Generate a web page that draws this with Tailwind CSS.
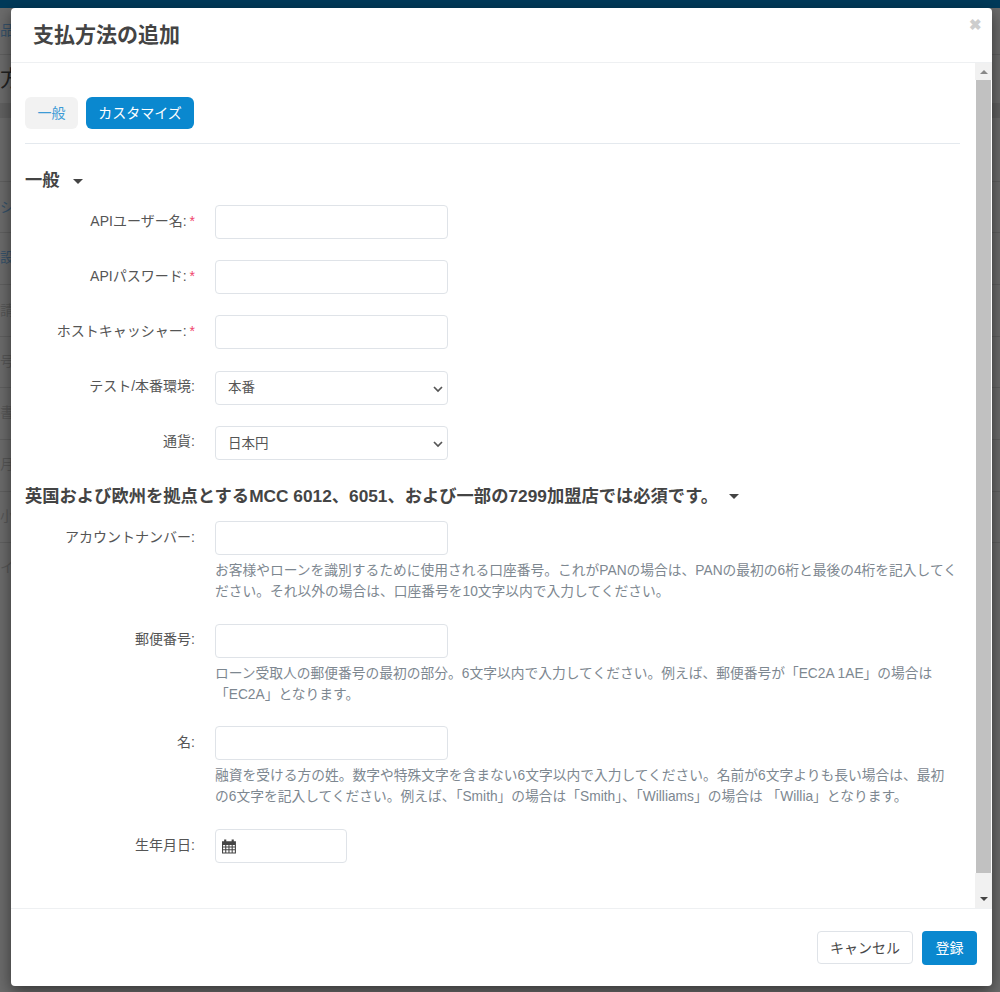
<!DOCTYPE html>
<html lang="ja">
<head>
  <meta charset="UTF-8" />
  <title>支払方法の追加</title>
  <script src="https://cdn.jsdelivr.net/npm/@tailwindcss/browser@4"></script>
</head>
<body class="h-[992px] w-[1000px] overflow-hidden bg-[#6b6b6b] font-['Liberation_Sans','Noto_Sans_CJK_JP',sans-serif] text-[#555]">
  <div class="relative h-[992px] overflow-hidden">
    <div class="h-2 bg-[#003a5a]"></div>

    <!-- page behind the modal -->
    <div class="h-[47px] border-b border-[#5f5f5f] pt-[14px] text-sm leading-4 text-[#36526a]">品</div>
    <div class="h-[48px] pt-3 text-[22px] leading-6 text-[#222]">方</div>
    <div class="h-[15px] bg-[#616161]"></div>
    <div class="h-[64px] border-b border-[#5f5f5f]"></div>
    <div class="h-[51px] border-b border-[#5f5f5f] pt-[17px] text-sm leading-4 text-[#36526a]">シ</div>
    <div class="h-[52px] border-b border-[#5f5f5f] pt-[16px] text-sm leading-4 text-[#36526a]">設</div>
    <div class="h-[52px] border-b border-[#5f5f5f] pt-[17px] text-sm leading-4 text-[#575757]">請</div>
    <div class="h-[51px] border-b border-[#5f5f5f] pt-[16px] text-sm leading-4 text-[#575757]">号</div>
    <div class="h-[52px] border-b border-[#5f5f5f] pt-[16px] text-sm leading-4 text-[#575757]">書</div>
    <div class="h-[52px] border-b border-[#5f5f5f] pt-[16px] text-sm leading-4 text-[#575757]">月</div>
    <div class="h-[51px] border-b border-[#5f5f5f] pt-[16px] text-sm leading-4 text-[#575757]">小</div>
    <div class="h-[51px] pt-[16px] text-sm leading-4 text-[#575757]">イ</div>

    <!-- modal -->
    <div class="absolute left-[11px] top-2 flex h-[978px] w-[981px] flex-col rounded bg-white shadow-[0_5px_15px_rgba(0,0,0,0.5)]">
      <div class="relative flex h-[55px] shrink-0 items-center border-b border-[#eef0f2] pl-[22px]">
        <h2 class="text-[21px] font-bold leading-6 text-[#444]">支払方法の追加</h2>
        <span class="absolute right-[10px] top-[7px] text-[15px] font-bold leading-5 text-[#cdcdcd]">✖</span>
      </div>

      <div class="flex min-h-0 flex-1">
        <div class="w-[964px] pl-[14px] pr-[15px]">
          <div class="flex h-[81px] items-start gap-2 border-b border-[#e4e9ee] pt-[34px]">
            <button class="h-8 w-[53px] rounded-md bg-[#f2f2f2] text-sm text-[#3c9bd6]">一般</button>
            <button class="h-8 w-[108px] rounded-md bg-[#0a88cf] text-sm text-white">カスタマイズ</button>
          </div>

          <div class="mt-[26px] flex h-5 items-center gap-[13px] pt-[2px] text-[17.3px] font-bold text-[#444]">
            一般
            <span class="h-0 w-0 border-x-[5px] border-t-[5px] border-x-transparent border-t-[#444]"></span>
          </div>

          <div class="mt-[15px] flex flex-col gap-[21.2px]">
            <div class="flex items-center">
              <label class="w-[170px] pb-[3px] text-right text-sm">APIユーザー名:<span class="ml-[3px] text-[#f0446c]">*</span></label>
              <input class="ml-[20px] h-[34px] w-[233px] rounded border border-[#dfe3e8]" />
            </div>
            <div class="flex items-center">
              <label class="w-[170px] pb-[3px] text-right text-sm">APIパスワード:<span class="ml-[3px] text-[#f0446c]">*</span></label>
              <input class="ml-[20px] h-[34px] w-[233px] rounded border border-[#dfe3e8]" />
            </div>
            <div class="flex items-center">
              <label class="w-[170px] pb-[3px] text-right text-sm">ホストキャッシャー:<span class="ml-[3px] text-[#f0446c]">*</span></label>
              <input class="ml-[20px] h-[34px] w-[233px] rounded border border-[#dfe3e8]" />
            </div>
            <div class="flex items-center">
              <label class="w-[170px] pb-[3px] text-right text-sm">テスト/本番環境:</label>
              <div class="relative ml-[20px] flex h-[34px] w-[233px] items-center rounded border border-[#dfe3e8] pl-3 pt-[2px] text-[13.5px]">
                本番
                <svg class="absolute right-[4px] top-[13px] h-2 w-[10px]" viewBox="0 0 10 8" fill="none" stroke="#555" stroke-width="1.7"><path d="M1 2l4 4 4-4" /></svg>
              </div>
            </div>
            <div class="flex items-center">
              <label class="w-[170px] pb-[3px] text-right text-sm">通貨:</label>
              <div class="relative ml-[20px] flex h-[34px] w-[233px] items-center rounded border border-[#dfe3e8] pl-3 pt-[2px] text-[13.5px]">
                日本円
                <svg class="absolute right-[4px] top-[13px] h-2 w-[10px]" viewBox="0 0 10 8" fill="none" stroke="#555" stroke-width="1.7"><path d="M1 2l4 4 4-4" /></svg>
              </div>
            </div>
          </div>

          <div class="mt-[26px] flex h-5 items-center gap-[11px] whitespace-nowrap pt-[2px] text-[17.3px] font-bold text-[#444]">
            英国および欧州を拠点とするMCC 6012、6051、および一部の7299加盟店では必須です。
            <span class="h-0 w-0 border-x-[5px] border-t-[5px] border-x-transparent border-t-[#444]"></span>
          </div>

          <div class="mt-[15px] flex flex-col gap-[21.8px]">
            <div class="flex items-start">
              <label class="mt-[6px] w-[170px] text-right text-sm">アカウントナンバー:</label>
              <div class="ml-[20px] w-[745px]">
                <input class="block h-[34px] w-[233px] rounded border border-[#dfe3e8]" />
                <p class="mt-[5px] text-[13.75px] leading-[21px] text-[#7d8790]">お客様やローンを識別するために使用される口座番号。これがPANの場合は、PANの最初の6桁と最後の4桁を記入してく<br />ださい。それ以外の場合は、口座番号を10文字以内で入力してください。</p>
              </div>
            </div>
            <div class="flex items-start">
              <label class="mt-[5px] w-[170px] text-right text-sm">郵便番号:</label>
              <div class="ml-[20px] w-[745px]">
                <input class="block h-[34px] w-[233px] rounded border border-[#dfe3e8]" />
                <p class="mt-[5px] text-[13.75px] leading-[21px] text-[#7d8790]">ローン受取人の郵便番号の最初の部分。6文字以内で入力してください。例えば、郵便番号が「EC2A 1AE」の場合は<br />「EC2A」となります。</p>
              </div>
            </div>
            <div class="flex items-start">
              <label class="mt-[6px] w-[170px] text-right text-sm">名:</label>
              <div class="ml-[20px] w-[745px]">
                <input class="block h-[34px] w-[233px] rounded border border-[#dfe3e8]" />
                <p class="mt-[5px] text-[13.75px] leading-[21px] text-[#7d8790]">融資を受ける方の姓。数字や特殊文字を含まない6文字以内で入力してください。名前が6文字よりも長い場合は、最初<br />の6文字を記入してください。例えば、「Smith」の場合は「Smith」、「Williams」の場合は 「Willia」となります。</p>
              </div>
            </div>
            <div class="flex items-center">
              <label class="w-[170px] pb-[3px] text-right text-sm">生年月日:</label>
              <div class="ml-[20px] flex h-[34px] w-[132px] items-center rounded border border-[#dfe3e8] pl-[6px]">
                <svg class="h-[15px] w-[15px]" viewBox="1 1 14 14" fill="#444"><path d="M1 3h2V1.5h2V3h5V1.5h2V3h2v11.5H1zm1 3.5V8h2V6.5zm3 0V8h2V6.5zm3 0V8h2V6.5zm3 0V8h2V6.5zM2 9v1.5h2V9zm3 0v1.5h2V9zm3 0v1.5h2V9zm3 0v1.5h2V9zm-9 2.5v2h2v-2zm3 0v2h2v-2zm3 0v2h2v-2zm3 0v2h2v-2z" fill-rule="evenodd" /></svg>
              </div>
            </div>
          </div>
        </div>

        <!-- scrollbar -->
        <div class="flex w-[17px] flex-col items-center">
          <div class="flex h-[17px] w-full items-center justify-center bg-[#f1f1f1]">
            <span class="h-0 w-0 border-x-[4px] border-b-[4px] border-x-transparent border-b-[#888]"></span>
          </div>
          <div class="h-[793px] w-[15px] bg-[#c1c1c1]"></div>
          <div class="flex w-full flex-1 items-end justify-center bg-[#f1f1f1] pb-[7px]">
            <span class="h-0 w-0 border-x-[4px] border-t-[4px] border-x-transparent border-t-[#444]"></span>
          </div>
        </div>
      </div>

      <div class="flex h-[78px] shrink-0 items-start justify-end gap-[9px] border-t border-[#eef0f2] pr-[15px] pt-[22px]">
        <button class="h-[33px] w-[96px] rounded border border-[#dfe3e8] bg-white text-sm text-[#484848]">キャンセル</button>
        <button class="h-[34px] w-[55px] rounded bg-[#0a88cf] text-sm text-white">登録</button>
      </div>
    </div>
  </div>
</body>
</html>
